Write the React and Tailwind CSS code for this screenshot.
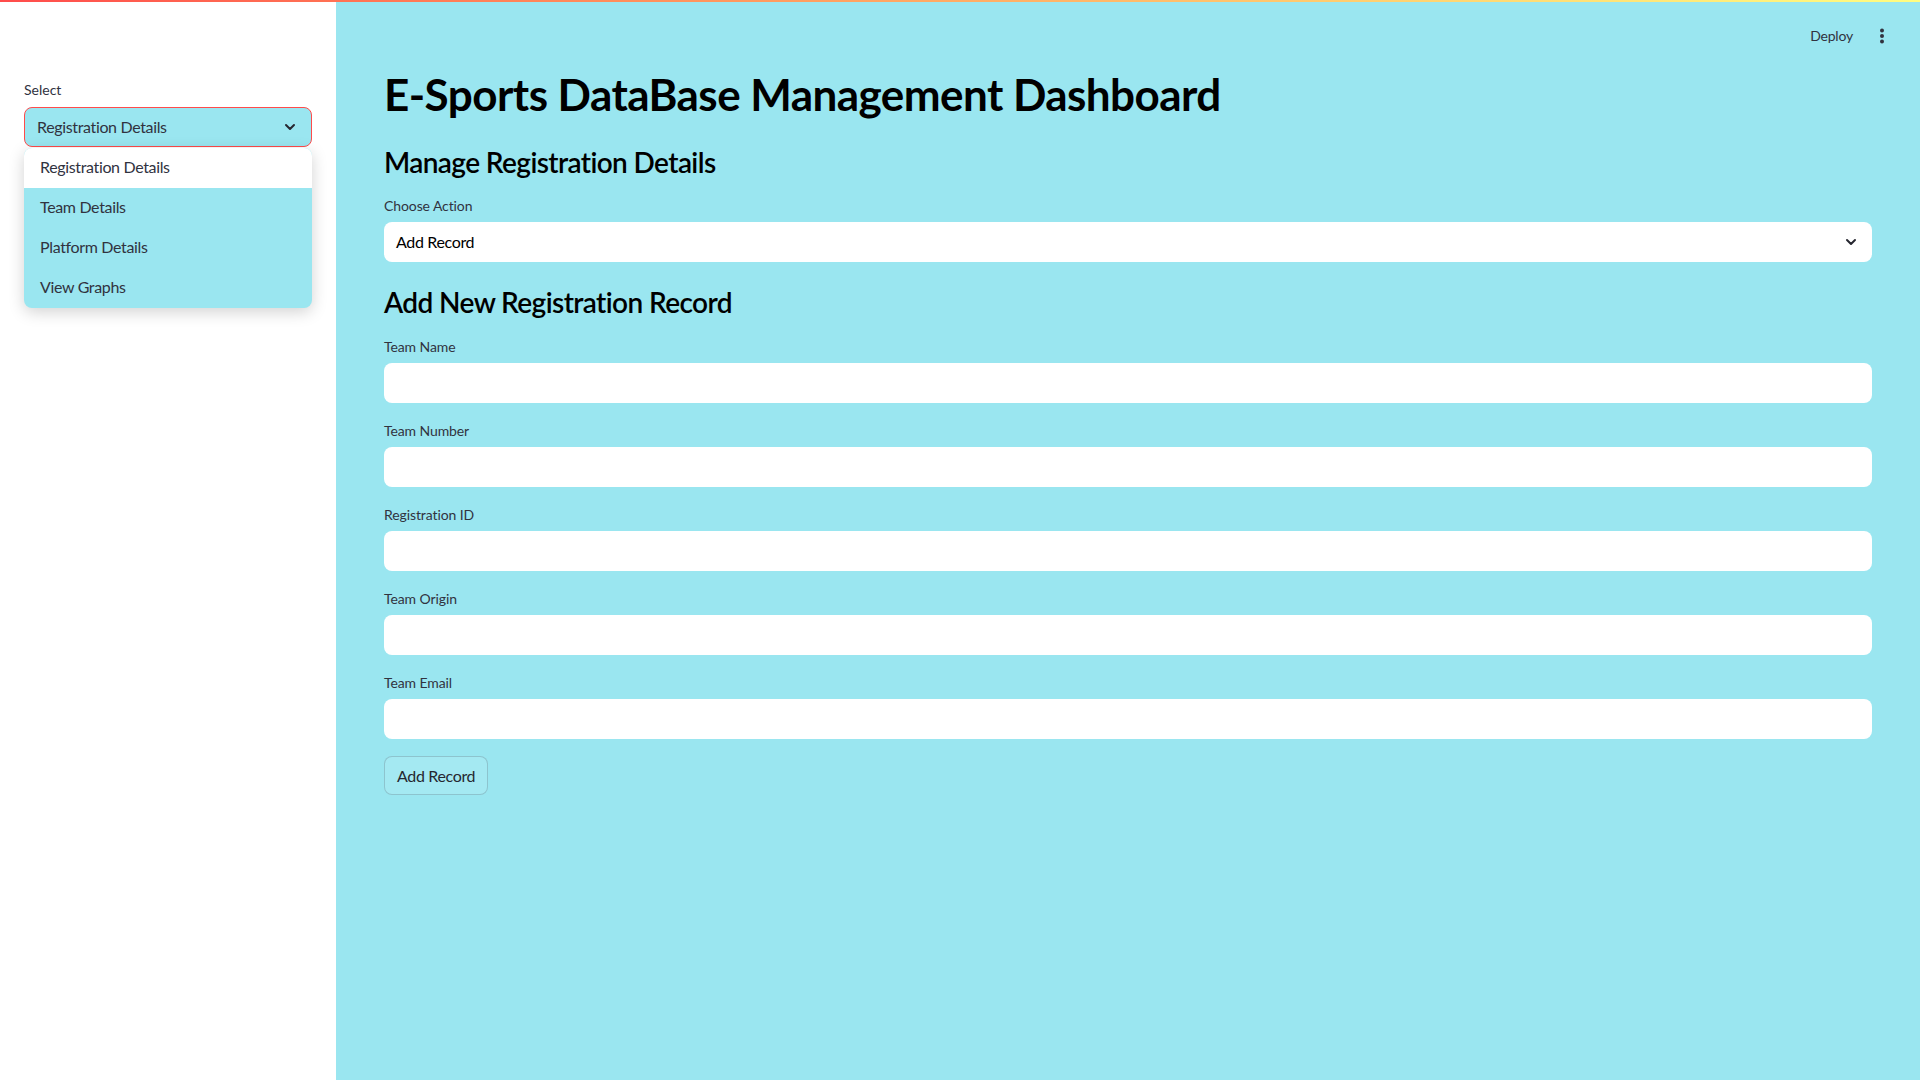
import { ChevronDown } from 'lucide-react';

const fields = ['Team Name', 'Team Number', 'Registration ID', 'Team Origin', 'Team Email'];
const pages = ['Registration Details', 'Team Details', 'Platform Details', 'View Graphs'];

function Field({ label }) {
  return (
    <div className="mt-[18px]">
      <div className="text-[14px] leading-5 tracking-[-0.1px] text-[#31333f]">{label}</div>
      <div className="mt-[6px] h-10 w-full rounded-lg bg-white" />
    </div>
  );
}

export default function App() {
  return (
    <div className="relative flex min-h-[1080px] w-full font-['Lato','Noto_Sans',sans-serif] text-[#31333f]">
      {/* top decoration */}
      <div className="absolute left-0 right-0 top-0 z-20 h-[2px] bg-gradient-to-r from-[#ff4b4b] to-[#fffd80]" />

      {/* Sidebar */}
      <aside className="w-[336px] shrink-0 bg-white px-6 pt-[80px]">
        <div className="text-[14px] leading-5">Select</div>
        <div className="relative mt-[7px]">
          <div className="flex h-[40px] items-center justify-between rounded-lg border border-[#ff4b4b] bg-[#9ae6f0] pl-3 pr-[13px]">
            <span className="text-[16px] tracking-[-0.35px]">Registration Details</span>
            <ChevronDown className="h-4 w-4 text-[#262730]" strokeWidth={3} />
          </div>
          <ul className="absolute left-0 right-0 top-[calc(100%+1px)] z-10 overflow-hidden rounded-lg bg-[#9ae6f0] shadow-[0_4px_16px_rgba(0,0,0,0.18)]">
            {pages.map((p, i) => (
              <li
                key={p}
                className={`flex h-10 items-center px-4 pb-[2px] text-[16px] tracking-[-0.35px] text-[#31333f] ${i === 0 ? 'bg-white' : ''}`}
              >
                {p}
              </li>
            ))}
          </ul>
        </div>
      </aside>

      {/* Main */}
      <main className="flex flex-1 flex-col bg-[#9ae6f0]">
        <header className="flex h-[68px] items-start justify-end gap-[27px] pr-[36px] pt-[26px]">
          <span className="text-[14px] leading-5 tracking-[-0.2px] text-[#31333f]">Deploy</span>
          <svg width="4" height="16" viewBox="0 0 4 16" className="mt-[2px]">
            <circle cx="2" cy="2.5" r="2" fill="#31333f" />
            <circle cx="2" cy="8" r="2" fill="#31333f" />
            <circle cx="2" cy="13.5" r="2" fill="#31333f" />
          </svg>
        </header>

        <div className="px-12">
          <h1 className="text-[44px] font-bold leading-[52px] tracking-[-0.55px] text-black">E-Sports DataBase Management Dashboard</h1>
          <h3 className="mt-[25px] text-[28px] font-semibold leading-[34px] tracking-[-0.6px] text-black">Manage Registration Details</h3>

          <div className="mt-[17px] text-[14px] leading-5 tracking-[-0.1px]">Choose Action</div>
          <div className="mt-[6px] flex h-10 w-full items-center justify-between rounded-lg bg-white pl-3 pr-[13px]">
            <span className="text-[16px] tracking-[-0.35px] text-black">Add Record</span>
            <ChevronDown className="h-4 w-4 text-[#262730]" strokeWidth={3} />
          </div>

          <h3 className="mt-[23px] text-[28px] font-semibold leading-[34px] tracking-[-0.6px] text-black">Add New Registration Record</h3>

          <div className="mt-[1px]">
            {fields.map(f => (
              <Field key={f} label={f} />
            ))}
          </div>

          <button className="mt-[17px] h-[39px] rounded-lg border border-[rgba(49,51,63,0.2)] bg-[#a4e9f2] px-3 text-[16px] tracking-[-0.35px] text-[#262730]">
            Add Record
          </button>
        </div>
      </main>
    </div>
  );
}
